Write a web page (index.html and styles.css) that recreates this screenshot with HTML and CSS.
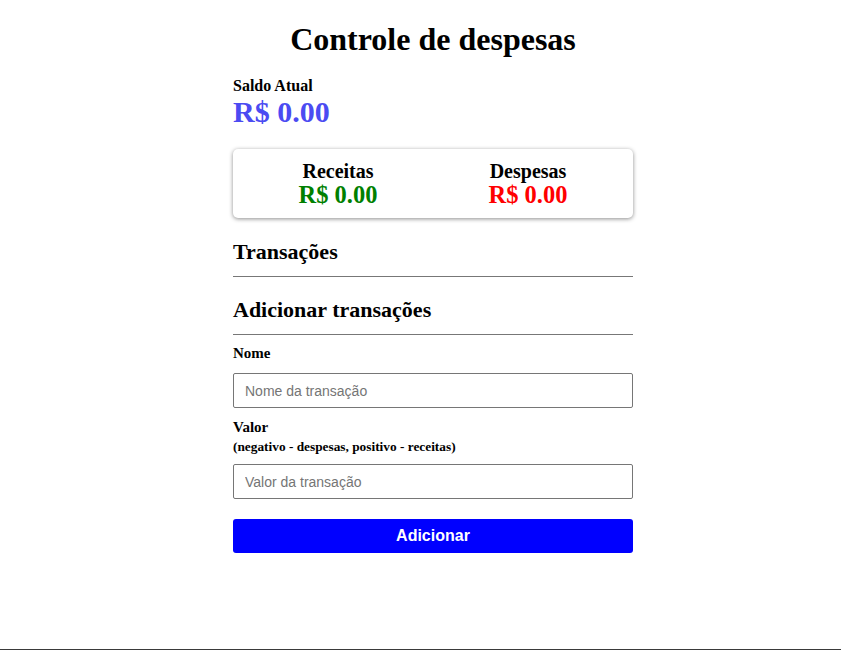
FILE: index.html
```html
<!DOCTYPE html>
<html lang="pt-BR">
<head>
<meta charset="utf-8">
<title>Controle de despesas</title>
<link rel="stylesheet" href="styles.css">
</head>
<body>
<main class="page">
  <div class="container">
    <h1 class="title">Controle de despesas</h1>
    <h4 class="balance-label">Saldo Atual</h4>
    <div class="balance">R$ 0.00</div>
    <div class="card">
      <div class="card-col">
        <h4 class="card-label">Receitas</h4>
        <div class="money plus">R$ 0.00</div>
      </div>
      <div class="card-col">
        <h4 class="card-label">Despesas</h4>
        <div class="money minus">R$ 0.00</div>
      </div>
    </div>
    <h3 class="section-title">Transações</h3>
    <ul class="list"></ul>
    <h3 class="section-title">Adicionar transações</h3>
    <form class="form">
      <div class="field">
        <label class="label" for="name">Nome</label>
        <input class="input" id="name" type="text" placeholder="Nome da transação">
      </div>
      <div class="field">
        <label class="label label-hinted" for="amount">Valor<span class="hint">(negativo - despesas, positivo - receitas)</span></label>
        <input class="input" id="amount" type="number" placeholder="Valor da transação">
      </div>
      <button class="btn" type="button">Adicionar</button>
    </form>
  </div>
</main>
</body>
</html>
```
FILE: styles.css
```css
html, body {
  margin: 0;
  padding: 0;
  background: #fff;
}
body {
  font-family: "Liberation Serif", "Times New Roman", serif;
  color: #000;
}
.page {
  box-sizing: border-box;
  height: 650px;
  border-bottom: 1px solid #3a3a3a;
  padding-left: 25px;
  overflow: hidden;
}
.container {
  width: 400px;
  margin: 0 auto;
}
.title {
  font-size: 32px;
  text-align: center;
  margin: 21px 0 0;
  line-height: 37px;
}
.balance-label {
  font-size: 16px;
  margin: 19px 0 0;
  line-height: 18px;
}
.balance {
  font-size: 30px;
  font-weight: bold;
  color: #4b4bf2;
  line-height: 34px;
  margin: 0;
}
.card {
  margin-top: 20px;
  height: 69px;
  box-sizing: border-box;
  border-radius: 5px;
  box-shadow: 0 1px 4px rgba(0, 0, 0, 0.45);
  display: flex;
  align-items: center;
  padding: 0 10px;
}
.card-col {
  flex: 1;
  text-align: center;
}
.card-label {
  font-size: 20px;
  margin: 0;
  line-height: 22px;
}
.money {
  font-size: 24.5px;
  font-weight: bold;
  line-height: 26px;
}
.plus { color: #008000; }
.minus { color: #ff0000; }
.section-title {
  font-size: 22px;
  margin: 21px 0 0;
  line-height: 26px;
  padding-bottom: 11px;
  border-bottom: 1px solid #777;
}
.section-title + .list + .section-title {
  margin-top: 20px;
}
.list {
  list-style: none;
  margin: 0;
  padding: 0;
}
.form {
  margin-top: 9px;
}
.field {
  display: flex;
  flex-direction: column;
}
.label {
  font-size: 15px;
  font-weight: bold;
  line-height: 18px;
  margin-bottom: 11px;
}
.label-hinted {
  margin-bottom: 8px;
}
.hint {
  display: block;
  font-size: 13.33px;
  line-height: 18px;
  padding-top: 2px;
}
.input {
  box-sizing: border-box;
  width: 400px;
  height: 35px;
  border: 1px solid #767676;
  border-radius: 2px;
  padding: 0 11px;
  font-family: "Liberation Sans", Arial, sans-serif;
  font-size: 14px;
  margin: 0 0 10px;
}
.input::placeholder {
  color: #757575;
}
.btn {
  display: block;
  width: 400px;
  height: 34px;
  margin-top: 10px;
  background: #0000ff;
  color: #fff;
  border: none;
  border-radius: 3px;
  font-family: "Liberation Sans", Arial, sans-serif;
  font-weight: bold;
  font-size: 16px;
}
```
